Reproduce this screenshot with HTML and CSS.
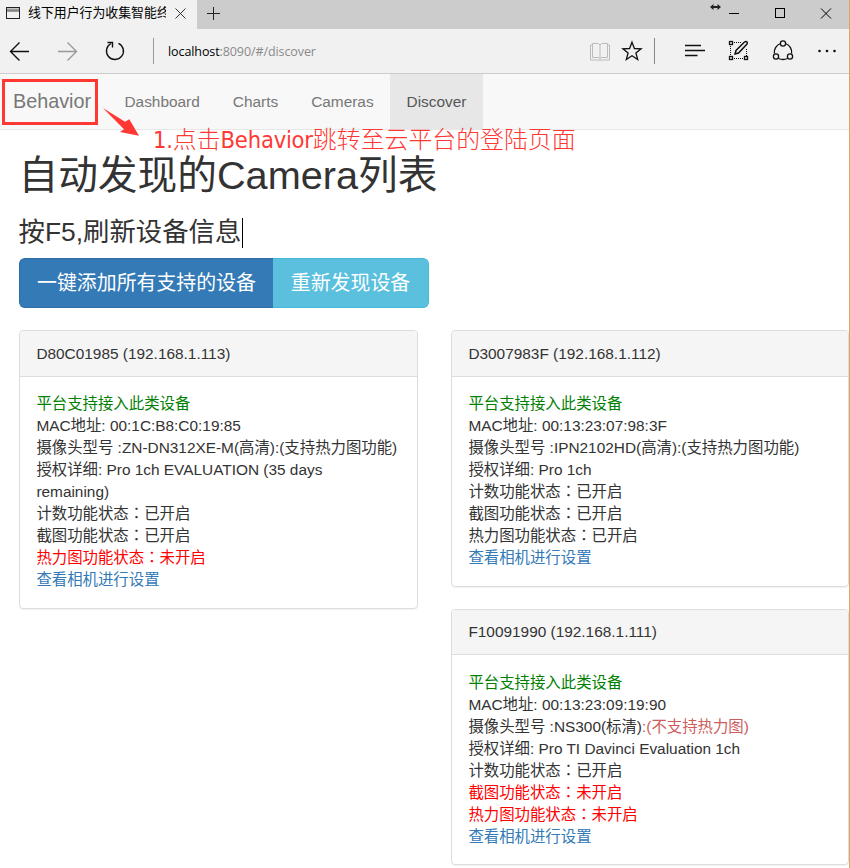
FILE: index.html
```html
<!DOCTYPE html>
<html lang="zh-CN">
<head>
<meta charset="utf-8">
<title>线下用户行为收集智能终端</title>
<link rel="stylesheet" href="styles.css">
</head>
<body>
<div class="window">
  <div class="tabs">
    <div class="tab">
      <svg class="page-icon" width="14" height="12" viewBox="0 0 14 12"><rect x=".5" y=".5" width="13" height="11" fill="none" stroke="#222"/><path d="M1 2.5h12" stroke="#999" stroke-width="2"/><path d="M1 4h12" stroke="#444"/></svg>
      <span class="tab-title">线下用户行为收集智能终</span>
      <svg class="tab-close" width="11" height="11" viewBox="0 0 11 11"><path d="M.5.5l10 10M10.500.5l-10 10" stroke="#333"/></svg>
    </div>
    <svg class="plus" width="13" height="13" viewBox="0 0 13 13"><path d="M0 6.500h13M6.500 0v13" stroke="#222"/></svg>
    <div class="window-buttons">
      <svg width="135" height="29" viewBox="0 0 135 29" fill="none" stroke="#000"><path d="M3 7h5" stroke="#222" stroke-width="2"/><path d="M3.500 4L0 7l3.500 3zM7.500 4L11 7l-3.500 3z" fill="#222" stroke="none"/><path d="M19 13.500h10"/><rect x="65.500" y="8.500" width="9" height="9"/><path d="M111 8.500l10 10M121 8.500l-10 10"/></svg>
    </div>
  </div>
  <div class="toolbar">
    <svg width="168" height="44" viewBox="0 0 168 44" fill="none" stroke="#111" stroke-width="1.400"><path d="M29 22.500H11M19.500 13.500l-9 9 9 9"/><path d="M58 22.500h18M67.500 13.500l9 9-9 9" stroke="#999"/><path d="M118.500 14.300a8.500 8.500 0 1 1-7.500.2"/><path d="M107.500 13.500h5v5"/><path d="M153.500 9v26" stroke="#999" stroke-width="1"/></svg>
    <div class="address">localhost<span>:8090/#/discover</span></div>
    <svg class="tools" width="260" height="44" viewBox="590 29 260 44" fill="none" stroke="#111" stroke-width="1.300">
      <path d="M600 44.500v14M598.500 43.500h-6v14h6l1.500 1.500 1.500-1.500h6v-14h-6l-1.500 1.500zM592.500 45h-2v15h8.500l1 .7 1-.7h8.500V45h-2" stroke="#bbb" stroke-width="1"/>
      <path d="M632 42.200l2.400 6.300 6.700.3-5.200 4.200 1.800 6.500-5.700-3.700-5.700 3.700 1.800-6.500-5.200-4.200 6.700-.3z"/>
      <path d="M654.500 38v26" stroke="#888" stroke-width="1"/>
      <path d="M685 45.500h16M685 50.500h20M685 55.500h12.500"/>
      <g stroke-width="1.300"><rect x="729.500" y="41.500" width="3" height="3"/><rect x="729.500" y="56.500" width="3" height="3"/><rect x="744.500" y="56.500" width="3" height="3"/><path d="M734 42.500h8M734 58.500h10M730.500 46v10M746.500 49v7" stroke-width="1" stroke-dasharray="1 1"/><path d="M735 54l1-3.500 8.500-8.500q1.500-1 2.500 0 .8 1-.2 2.200L738.500 53z" stroke-width="1.500"/></g>
      <path d="M780.500 43.500c-4.500 1.500-6.700 6-6.100 10M785.500 43.500c4.500 1.500 6.700 6 6.100 10M778.500 58.500q4.500 2 9 0"/><circle cx="783" cy="43.500" r="2.600"/><circle cx="776" cy="56.500" r="2.600"/><circle cx="790" cy="56.500" r="2.600"/>
      <g fill="#111" stroke="none"><circle cx="819.500" cy="51" r="1.300"/><circle cx="827" cy="51" r="1.300"/><circle cx="834.500" cy="51" r="1.300"/></g>
    </svg>
  </div>
  <nav class="navbar">
    <a class="brand">Behavior</a>
    <a class="nav-link">Dashboard</a><a class="nav-link">Charts</a><a class="nav-link">Cameras</a><a class="nav-link active">Discover</a>
  </nav>
  <main>
    <h1>自动发现的Camera列表</h1>
    <h3>按F5,刷新设备信息<i class="caret"></i></h3>
    <div class="btn-group"><button class="btn primary">一键添加所有支持的设备</button><button class="btn info">重新发现设备</button></div>
    <div class="columns">
      <div class="column">
        <section class="panel">
          <header>D80C01985 (192.168.1.113)</header>
          <div class="panel-body">
            <p class="green">平台支持接入此类设备</p>
            <p>MAC地址: 00:1C:B8:C0:19:85</p>
            <p class="line">摄像头型号 :ZN-DN312XE-M(高清):(支持热力图功能)</p>
            <p class="license">授权详细: Pro 1ch EVALUATION (35 days remaining)</p>
            <p>计数功能状态<span class="colon" lang="zh-TW">：</span>已开启</p>
            <p>截图功能状态<span class="colon" lang="zh-TW">：</span>已开启</p>
            <p class="red">热力图功能状态<span class="colon" lang="zh-TW">：</span>未开启</p>
            <p><a class="link">查看相机进行设置</a></p>
          </div>
        </section>
      </div>
      <div class="column right">
        <section class="panel">
          <header>D3007983F (192.168.1.112)</header>
          <div class="panel-body">
            <p class="green">平台支持接入此类设备</p>
            <p>MAC地址: 00:13:23:07:98:3F</p>
            <p>摄像头型号 :IPN2102HD(高清):(支持热力图功能)</p>
            <p>授权详细: Pro 1ch</p>
            <p>计数功能状态<span class="colon" lang="zh-TW">：</span>已开启</p>
            <p>截图功能状态<span class="colon" lang="zh-TW">：</span>已开启</p>
            <p>热力图功能状态<span class="colon" lang="zh-TW">：</span>已开启</p>
            <p><a class="link">查看相机进行设置</a></p>
          </div>
        </section>
        <section class="panel">
          <header>F10091990 (192.168.1.111)</header>
          <div class="panel-body">
            <p class="green">平台支持接入此类设备</p>
            <p>MAC地址: 00:13:23:09:19:90</p>
            <p>摄像头型号 :NS300(标清)<span class="muted-red">:(不支持热力图)</span></p>
            <p>授权详细: Pro TI Davinci Evaluation 1ch</p>
            <p>计数功能状态<span class="colon" lang="zh-TW">：</span>已开启</p>
            <p class="red">截图功能状态<span class="colon" lang="zh-TW">：</span>未开启</p>
            <p class="red">热力图功能状态<span class="colon" lang="zh-TW">：</span>未开启</p>
            <p><a class="link">查看相机进行设置</a></p>
          </div>
        </section>
      </div>
    </div>
  </main>
  <div class="callout-box"></div>
  <svg class="callout-arrow" width="40" height="32" viewBox="0 0 40 32"><path d="M1 1l22 13.700 4.300-2.400L37 28.700 18 25l4-2.700z" fill="#ff3834"/></svg>
  <div class="callout-text">1.<span class="cjk">点击</span>Behavior<span class="cjk">跳转至云平台的登陆页面</span></div>
  <div class="window-edge"></div>
</div>
</body>
</html>
```
FILE: styles.css
```css
* { box-sizing: border-box; }
body { margin: 0; background: #fff; color: #333; font: 15.4px/22px "Liberation Sans", "Noto Sans CJK SC", sans-serif; }
svg { display: block; flex: none; }
p { margin: 0; }
.window { position: relative; width: 850px; height: 868px; overflow: hidden; }
.tabs { display: flex; align-items: center; height: 29px; background: #ccc; }
.tab { display: flex; align-items: center; width: 197px; height: 29px; padding: 0 11px 3px 6px; background: #f1f1f1; }
.tab-title { width: 138px; margin: 0 10px 0 8px; overflow: hidden; white-space: nowrap; color: #000; font-size: 12.900px; }
.tab-close { margin-left: -1px; }
.plus { margin: -2px 0 0 10px; }
.window-buttons { margin-left: auto; margin-right: 5px; }
.toolbar { display: flex; align-items: center; height: 45px; background: #f1f1f1; border-bottom: 1px solid #ccc; }
.address { padding-top: 1px; color: #000; font: 12.500px/22px "Open Sans", "Noto Sans", sans-serif; letter-spacing: -.09px; white-space: nowrap; }
.address span { color: #8a8a8a; }
.tools { margin-left: auto; }
.navbar { display: flex; height: 56px; background: #f8f8f8; border-bottom: 1px solid #e7e7e7; line-height: 56px; color: #777; }
.brand { width: 108px; padding-left: 13px; font-size: 19.800px; line-height: 54px; }
.nav-link { padding: 0 16.500px; }
.active { background: #e7e7e7; color: #555; }
main { padding: 23px 0 0 18.500px; }
h1, h3 { margin: 0; font-weight: 400; white-space: nowrap; }
h1 { height: 55px; font-size: 39.700px; line-height: 44px; }
h3 { display: flex; align-items: center; height: 29px; margin: 10px 0 11px; font-size: 26.400px; line-height: 29px; }
.caret { width: 1px; height: 30px; margin-left: 1px; background: #000; }
.btn-group { display: flex; height: 50px; }
.btn { padding: 0 0 0 1px; border: 1px solid; color: #fff; font: 19.900px/26px "Liberation Sans", "Noto Sans CJK SC", sans-serif; white-space: nowrap; }
.primary { width: 254px; background: #337ab7; border-color: #2e6da4; border-right: 0; border-radius: 6px 0 0 6px; }
.info { width: 156px; background: #5bc0de; border-color: #46b8da; border-left: 0; border-radius: 0 6px 6px 0; }
.columns { display: flex; gap: 33px; margin-top: 22.400px; }
.column { width: 399px; flex: none; }
.right { width: 398px; }
.panel { margin-bottom: 22px; border: 1px solid #ddd; border-radius: 4px; box-shadow: 0 1px 1px rgba(0,0,0,.05); }
.panel header { height: 45.500px; padding: 11.600px 16.900px; background: #f5f5f5; border-bottom: 1px solid #ddd; border-radius: 3px 3px 0 0; }
.panel-body { padding: 16.200px 16.900px 16.800px; }
.line { white-space: nowrap; }
.license { max-width: 340px; }
.colon { font-family: "Noto Sans CJK TC", sans-serif; line-height: 1; }
.green { color: #008000; }
.red { color: #f00; }
.muted-red { color: #cd5c5c; }
.link { color: #337ab7; }
.callout-box { position: absolute; left: 2px; top: 79px; width: 96px; height: 46px; border: 3px solid #ff3834; }
.callout-arrow { position: absolute; left: 102px; top: 107px; }
.callout-text { position: absolute; left: 153px; top: 124px; color: #ff3834; font: 23.500px/28px "DejaVu Sans Condensed", "DejaVu Sans", sans-serif; font-stretch: condensed; letter-spacing: -.2px; white-space: nowrap; }
.cjk { font: 300 23.900px/28px "Noto Sans CJK SC", sans-serif; letter-spacing: 0; }
.window-edge { position: absolute; top: 0; right: 0; width: 1px; height: 868px; background: #d9a75f; }
```
